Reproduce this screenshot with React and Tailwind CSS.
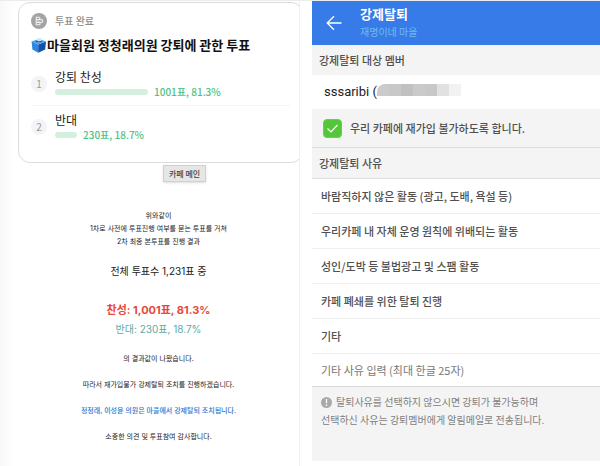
import React, { useState } from "react";

const options = [
  { id: 1, label: "강퇴 찬성", result: "1001표, 81.3%", percent: 81.3 },
  { id: 2, label: "반대", result: "230표, 18.7%", percent: 18.7 },
];

const reasons = [
  "바람직하지 않은 활동 (광고, 도배, 욕설 등)",
  "우리카페 내 자체 운영 원칙에 위배되는 활동",
  "성인/도박 등 불법광고 및 스팸 활동",
  "카페 폐쇄를 위한 탈퇴 진행",
  "기타",
];

const VoteIcon = () => (
  <svg className="w-4 h-4 shrink-0" viewBox="0 0 16 16" aria-hidden="true">
    <circle cx="8" cy="8" r="8" fill="#a3a3a3" />
    <path
      d="M5.2 3.8v8.4M5.2 4.3h3.6v2.4h-3.6M5.2 6.7h6.4v2.6h-6.4M5.2 9.3h3.8v2.4h-3.8"
      fill="none"
      stroke="#f3f3f3"
      strokeWidth="1"
    />
  </svg>
);

const BallotBox = () => (
  <svg className="w-4 h-4 shrink-0" viewBox="0 0 16 16" aria-hidden="true">
    <path d="M.6 4.3 7.2 7.4v8.3L1.4 12.4z" fill="#2f86e0" />
    <path d="M7.2 7.4 15 4.5l-.8 8-7 3.2z" fill="#1552a4" />
    <path d="M.6 4.3 8.4 1.9 15 4.5 7.2 7.4z" fill="#4ba0ec" />
    <path d="M4.8 4.7 10.8 4.2" stroke="#123a73" strokeWidth="0.9" />
    <path d="M6.2 1.4 9.8.8l.9 3-4 .6z" fill="#cfe6f8" />
  </svg>
);

const VoteCard = () => (
  <section className="-mr-1 rounded-xl border border-[#dcdcdc] bg-white px-3 pt-2.5 pb-5">
    <div className="flex items-center gap-2 text-[10px] leading-4 font-medium text-[#8c8c8c]">
      <VoteIcon />
      투표 완료
    </div>
    <h1 className="flex items-center mt-2 text-[13px] leading-4 font-bold text-[#111]">
      <BallotBox />
      마을회원 정청래의원 강퇴에 관한 투표
    </h1>
    <ol className="mt-4">
      {options.map((option) => (
        <li
          key={option.id}
          className="flex items-center gap-2 pb-1.5 mb-1.5 border-b border-[#f4f4f4] last:border-0 last:mb-0 last:pb-0"
        >
          <span className="w-4 h-4 shrink-0 rounded-full bg-[#f3f4f6] text-center text-[10px] leading-4 text-[#9a9a9a]">
            {option.id}
          </span>
          <div className="grow">
            <p className="text-[12px] leading-4 text-[#222]">{option.label}</p>
            <div className="flex items-center gap-1.5 h-3.5">
              <div
                className="h-1.5 rounded-full bg-[#d5efdf]"
                style={{ width: Math.round(option.percent * 1.15) }}
              />
              <span className="text-[10px] leading-3 font-medium text-[#4fc285]">
                {option.result}
              </span>
            </div>
          </div>
        </li>
      ))}
    </ol>
  </section>
);

const Notice = () => (
  <article className="pt-[27px] text-center font-[Inter,'Noto_Sans_CJK_KR',sans-serif] text-[7px] leading-[13px] text-[#222]">
    <p>위와같이</p>
    <p>1차로 사전에 투표진행 여부를 묻는 투표를 거쳐</p>
    <p>2차 최종 본투표를 진행 결과</p>
    <p className="mt-3.5 text-[10px] leading-[19px]">전체 투표수 1,231표 중</p>
    <p className="mt-5 text-[11px] leading-[19px] font-bold text-[#e8483b]">
      찬성: 1,001표, 81.3%
    </p>
    <p className="text-[10px] leading-[19px] text-[#5fa9a5]">반대: 230표, 18.7%</p>
    <p className="mt-[13px]">의 결과값이 나왔습니다.</p>
    <p className="mt-[13px]">따라서 재가입불가 강제탈퇴 조치를 진행하겠습니다.</p>
    <p className="mt-[13px] font-medium text-[#2a77d0]">
      정청래, 이성윤 의원은 마을에서 강제탈퇴 조치됩니다.
    </p>
    <p className="mt-[13px]">소중한 의견 및 투표참여 감사합니다.</p>
  </article>
);

const KickForm = () => {
  const [blockRejoin, setBlockRejoin] = useState(true);
  const [reason, setReason] = useState("");
  const [custom, setCustom] = useState("");

  return (
    <div className="text-[11px] leading-4 text-[#505050]">
      <header className="flex items-center gap-4 h-11 pl-3 bg-[#367be8]">
        <button type="button" aria-label="뒤로" className="text-white">
          <svg className="w-5 h-5" viewBox="0 0 20 20" fill="none" aria-hidden="true">
            <path
              d="M17.5 10H3.5M10 3.2 3.2 10l6.8 6.8"
              stroke="currentColor"
              strokeWidth="1.3"
            />
          </svg>
        </button>
        <div>
          <h2 className="text-[13px] leading-4 font-bold text-white">강제탈퇴</h2>
          <p className="mt-0.5 text-[10px] leading-4 text-[#72bce8]">재명이네 마을</p>
        </div>
      </header>

      <h3 className="px-[7px] py-[7px] bg-[#f4f4f4] font-medium">강제탈퇴 대상 멤버</h3>
      <div className="flex items-center h-[34px] pl-3 text-[13px] text-[#222] font-[Roboto,'Noto_Sans_CJK_KR',sans-serif]">
        <span>sssaribi (</span>
        <span className="flex h-3 mb-1 rounded-tl-lg overflow-hidden" aria-hidden="true">
          <i className="w-3 bg-[#cbcbcb]" />
          <i className="w-3 bg-[#c8c8c8]" />
          <i className="w-3 bg-[#c1c1c1]" />
          <i className="w-3 bg-[#cacaca]" />
          <i className="w-3 bg-[#c8c8c8]" />
          <i className="w-3 bg-[#e1e1e1]" />
          <i className="w-3 bg-[#f2f2f2]" />
        </span>
      </div>

      <label className="flex items-center gap-2 h-[39px] pl-[11px] bg-[#f4f4f4] border-b border-[#dcdcdc] font-medium">
        <span className="relative flex">
          <input
            type="checkbox"
            checked={blockRejoin}
            onChange={(e) => setBlockRejoin(e.target.checked)}
            className="peer appearance-none w-[19px] h-[19px] rounded-sm border border-[#6fc957] bg-white checked:bg-[#54c63a]"
          />
          <svg
            className="absolute inset-0 w-full h-full pointer-events-none opacity-0 peer-checked:opacity-100"
            viewBox="0 0 19 19"
            fill="none"
            aria-hidden="true"
          >
            <path d="M4.5 9.5 8 13l6.5-7" stroke="#fff" strokeWidth="1.2" />
          </svg>
        </span>
        우리 카페에 재가입 불가하도록 합니다.
      </label>

      <h3 className="px-[7px] py-[7px] bg-[#f4f4f4] border-b border-[#dfdfdf] font-medium">
        강제탈퇴 사유
      </h3>
      <ul>
        {reasons.map((item) => (
          <li key={item} className="border-b border-[#f0f0f0]">
            <button
              type="button"
              aria-pressed={reason === item}
              onClick={() => setReason(item)}
              className="block w-full px-[9px] py-[9px] text-left font-medium"
            >
              {item}
            </button>
          </li>
        ))}
      </ul>
      <input
        type="text"
        aria-label="기타 사유 입력"
        value={custom}
        onChange={(e) => setCustom(e.target.value)}
        placeholder="기타 사유 입력 (최대 한글 25자)"
        className="block w-full h-[33px] px-[9px] border-b border-[#d8d8d8] outline-none placeholder:text-[#777]"
      />
      <div className="px-[9px] pt-1.5 pb-8 bg-[#f4f4f4] text-[10px] leading-[18px] text-[#808080]">
        <p className="flex items-center gap-1">
          <svg className="w-[11px] h-[11px]" viewBox="0 0 11 11" aria-hidden="true">
            <circle cx="5.5" cy="5.5" r="5.5" fill="#aaa" />
            <path d="M5.5 2v4.3M5.5 7.5v1.4" stroke="#fff" strokeWidth="1.3" />
          </svg>
          탈퇴사유를 선택하지 않으시면 강퇴가 불가능하며
        </p>
        <p>선택하신 사유는 강퇴멤버에게 알림메일로 전송됩니다.</p>
      </div>
    </div>
  );
};

const App = () => {
  return (
    <main className="grid grid-cols-2 min-h-screen bg-white border-t border-[#ececec] font-['Noto_Sans_CJK_KR',sans-serif]">
      <div className="overflow-hidden pl-[18px] pt-px border-r border-[#f1f1f1] bg-linear-to-r from-[#f8f8f8] to-white to-5%">
        <VoteCard />
        <div className="flex justify-center pl-13 pt-0.5">
          <button
            type="button"
            className="px-[5px] border border-[#d0d0d0] bg-[#e6e6e6] shadow-sm text-[8px] leading-[15px] font-medium text-[#444]"
          >
            카페 메인
          </button>
        </div>
        <Notice />
      </div>
      <div className="pl-3">
        <KickForm />
      </div>
    </main>
  );
};

export default App;
